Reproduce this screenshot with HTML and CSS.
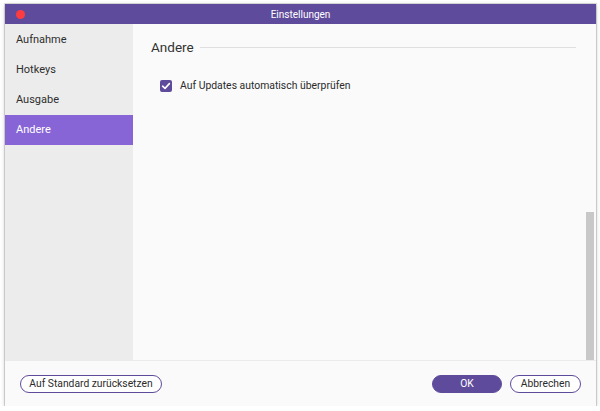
FILE: index.html
```html
<!DOCTYPE html>
<html lang="de">
<head>
<meta charset="utf-8">
<title>Einstellungen</title>
<link rel="stylesheet" href="styles.css">
</head>
<body>
<div class="window">
  <div class="titlebar">
    <div class="controls"><span class="dot"></span></div>
    <div class="title">Einstellungen</div>
    <div></div>
  </div>
  <div class="main">
    <nav class="sidebar">
      <div class="item">Aufnahme</div>
      <div class="item">Hotkeys</div>
      <div class="item">Ausgabe</div>
      <div class="item active">Andere</div>
    </nav>
    <section class="content">
      <div class="inner">
        <div class="heading"><span>Andere</span><span class="rule"></span></div>
        <label class="check">
          <span class="box"><svg width="12" height="12" viewBox="0 0 12 12"><path d="M2.6 6.2 L5 8.4 L9.4 3.6" fill="none" stroke="#fff" stroke-width="1.6" stroke-linecap="round" stroke-linejoin="round"/></svg></span>
          <span>Auf Updates automatisch überprüfen</span>
        </label>
      </div>
      <div class="track"><div class="thumb"></div></div>
    </section>
  </div>
  <footer class="footer">
    <button class="btn wide">Auf Standard zurücksetzen</button>
    <div class="actions">
      <button class="btn primary">OK</button>
      <button class="btn">Abbrechen</button>
    </div>
  </footer>
</div>
</body>
</html>
```
FILE: styles.css
```css
html, body {
  margin: 0;
  padding: 0;
  background: #ffffff;
}
body {
  font-family: Roboto, "Liberation Sans", Arial, sans-serif;
  font-size: 11px;
  color: #2b2b2b;
  padding: 4px 4px 0 5px;
}
.window {
  width: 591px;
  height: 402px;
  display: flex;
  flex-direction: column;
  background: #fafafa;
  box-shadow: 0 0 0 1px rgba(0,0,0,0.12), 0 1px 4px rgba(0,0,0,0.25);
}
.titlebar {
  height: 20px;
  background: #5f4b9b;
  display: grid;
  grid-template-columns: 1fr auto 1fr;
  align-items: center;
  color: #fff;
  font-size: 10px;
}
.controls {
  display: flex;
  padding-left: 11px;
}
.dot {
  width: 9px;
  height: 9px;
  border-radius: 50%;
  background: #fd3c42;
}
.main {
  height: 336px;
  display: flex;
}
.sidebar {
  width: 128px;
  background: #ececec;
  padding-top: 1px;
  box-sizing: border-box;
}
.item {
  height: 30px;
  line-height: 30px;
  padding-left: 11px;
  font-size: 11px;
  color: #2e2e2e;
}
.item.active {
  background: #8865d6;
  color: #fff;
}
.content {
  flex: 1;
  display: flex;
  background: #fafafa;
}
.inner {
  flex: 1;
  padding: 14px 10px 0 18px;
}
.heading {
  display: flex;
  align-items: center;
  gap: 6px;
  font-size: 13.5px;
  line-height: 18px;
  color: #333;
}
.rule {
  flex: 1;
  height: 1px;
  background: #dedede;
}
.check {
  display: flex;
  align-items: center;
  gap: 8px;
  margin: 23px 0 0 9px;
  font-size: 10.4px;
  color: #2b2b2b;
}
.box {
  width: 12px;
  height: 12px;
  border-radius: 2px;
  background: #5f4b9b;
  display: flex;
}
.track {
  width: 10px;
  display: flex;
  flex-direction: column;
}
.thumb {
  margin-top: auto;
  width: 8px;
  height: 148px;
  background: #c8c8c8;
}
.footer {
  flex: 1;
  border-top: 1px solid #ebebeb;
  display: flex;
  align-items: center;
  justify-content: space-between;
  padding: 0 15px 0 15px;
  background: #fafafa;
}
.actions {
  display: flex;
  gap: 8px;
}
.btn {
  height: 18px;
  padding: 0;
  border: 1.5px solid #5f4b9b;
  border-radius: 10px;
  background: #fff;
  font-family: Roboto, "Liberation Sans", Arial, sans-serif;
  font-size: 10.3px;
  color: #2b2b2b;
  width: 71px;
  white-space: nowrap;
  box-sizing: border-box;
}
.btn.wide {
  width: 142px;
}
.btn.primary {
  width: 70px;
  background: #5f4b9b;
  color: #fff;
}
```
